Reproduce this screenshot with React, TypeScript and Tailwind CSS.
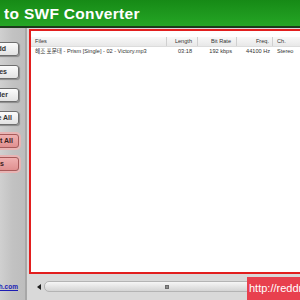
const buttons = [
  { label: 'Add', pink: false, pad: 'pr-[12px]' },
  { label: 'Add Files', pink: false, pad: 'pr-[11px]' },
  { label: 'Add Folder', pink: false, pad: 'pr-[10px]' },
  { label: 'Remove All', pink: false, pad: 'pr-[6px]' },
  { label: 'Convert All', pink: true, pad: 'pr-[5px]' },
  { label: 'Options', pink: true, pad: 'pr-[14px]' },
]

function SideButton({ label, pink, pad }: { label: string; pink: boolean; pad: string }) {
  return (
    <div
      className={`w-[70px] h-[14px] shrink-0 rounded-[3px] border flex items-center justify-end text-[7px] font-bold whitespace-nowrap ${pad} ${
        pink
          ? 'bg-gradient-to-b from-[#efb0b0] to-[#e09090] border-[#a85a5a] text-[#3a2020] shadow-[0_0_0_2px_#e8b4b4]'
          : 'bg-gradient-to-b from-[#fbfbfb] to-[#e2e2e2] border-[#6e6e6e] text-[#303030] shadow-[1px_1px_1px_#8a8a8a]'
      }`}
    >
      {label}
    </div>
  )
}

export default function App() {
  return (
    <div className="w-[300px] h-[300px] overflow-hidden relative font-['Liberation_Sans',Arial,sans-serif] bg-[#d9d9d9]">
      {/* title bar */}
      <div className="h-[28px] bg-gradient-to-b from-[#168a16] to-[#25a625] border-b-2 border-[#1b3a1b] flex items-center overflow-hidden whitespace-nowrap">
        <span className="-ml-[6px] pt-[1px] text-white font-bold text-[15.5px] tracking-[0.3px]">
          - to SWF Converter
        </span>
      </div>

      <div className="flex h-[272px]">
        {/* left panel */}
        <div className="w-[27px] h-full bg-gradient-to-r from-[#d0d0d0] via-[#c2c2c2] to-[#bdbdbd] border-r-2 border-[#a7a7a7] flex flex-col items-end pr-[6px] pt-[14px] gap-[9px] overflow-hidden">
          {buttons.map((b) => (
            <SideButton key={b.label} label={b.label} pink={b.pink} pad={b.pad} />
          ))}
          <div className="mt-auto mb-[8px] mr-[1px] text-[6.5px] font-bold text-[#1c1cb4] underline whitespace-nowrap">
            www.softech.com
          </div>
        </div>

        {/* main area */}
        <div className="flex-1 flex flex-col pl-[2px] pt-[1px]">
          <div className="h-[245px] border-2 border-r-0 border-[#e21e1e] bg-white pt-[6px] text-[5.6px] text-[#333] overflow-hidden">
            <div className="h-[10px] flex items-center bg-gradient-to-b from-[#f8f8f8] to-[#e8e8e8] border-b border-[#dcdcdc]">
              <div className="w-[136px] pl-[4px] h-full flex items-center border-r border-[#d0d0d0]">Files</div>
              <div className="w-[31px] pr-[5px] h-full flex items-center justify-end border-r border-[#d0d0d0]">Length</div>
              <div className="w-[39px] pr-[5px] h-full flex items-center justify-end border-r border-[#d0d0d0]">Bit Rate</div>
              <div className="w-[36px] pr-[3px] h-full flex items-center justify-end border-r border-[#d0d0d0]">Freq.</div>
              <div className="flex-1 pl-[4px]">Ch.</div>
            </div>
            <div className="h-[9px] flex items-center whitespace-nowrap">
              <div className="w-[136px] pl-[4px] overflow-hidden">
                <span className="font-['Noto_Sans_CJK_KR',sans-serif]">헤조 포문태</span> - Prism [Single] - 02 - Victory.mp3
              </div>
              <div className="w-[31px] pr-[6px] text-right">03:18</div>
              <div className="w-[39px] pr-[5px] text-right">192 kbps</div>
              <div className="w-[36px] pr-[3px] text-right">44100 Hz</div>
              <div className="flex-1 pl-[4px]">Stereo</div>
            </div>
          </div>

          {/* horizontal scrollbar */}
          <div className="flex items-start pt-[7px] pl-[8px]">
            <svg width="4" height="6" viewBox="0 0 4 6" className="mt-[3px]">
              <path d="M4 0 L0 3 L4 6 Z" fill="#202020" />
            </svg>
            <div className="ml-[3px] flex-1 h-[11px] rounded-l-[5px] border border-[#b4b4b4] bg-gradient-to-b from-[#f6f6f6] to-[#d4d4d4] flex items-center">
              <div className="ml-[120px] w-[4px] h-[4px] bg-[#8c8c8c] border border-[#6a6a6a]" />
            </div>
          </div>
        </div>
      </div>

      {/* watermark */}
      <div className="absolute right-0 bottom-0 w-[53px] h-[23px] bg-[#e8404e] text-white text-[11px] leading-none pl-[2px] pt-[6px] whitespace-nowrap overflow-hidden">
        http://reddream
      </div>
    </div>
  )
}
